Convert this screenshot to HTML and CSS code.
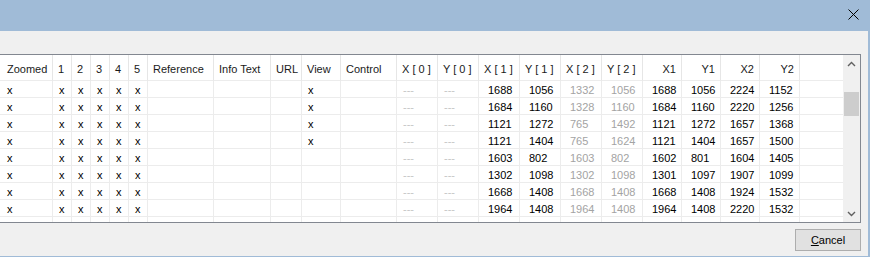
FILE: index.html
```html
<!DOCTYPE html>
<html lang="en">
<head>
    <meta charset="UTF-8">
    <title>Positions</title>
    <link rel="stylesheet" href="styles.css">
</head>
<body>
    <div class="window">
        <div class="titlebar">
            <span class="close">
                <svg width="11" height="11" viewBox="0 0 11 11">
                    <path d="M0.5 0.5 L10.5 10.5 M10.5 0.5 L0.5 10.5" stroke="#000" stroke-width="1" fill="none"/>
                </svg>
            </span>
        </div>

        <div class="dialog-body">
            <div class="grid-box">
                <div class="grid">
                    <div class="row head">
                        <div class="cell first">Zoomed</div>
                        <div class="cell">1</div>
                        <div class="cell">2</div>
                        <div class="cell">3</div>
                        <div class="cell">4</div>
                        <div class="cell">5</div>
                        <div class="cell">Reference</div>
                        <div class="cell">Info Text</div>
                        <div class="cell">URL</div>
                        <div class="cell">View</div>
                        <div class="cell">Control</div>
                        <div class="cell">X [ 0 ]</div>
                        <div class="cell">Y [ 0 ]</div>
                        <div class="cell">X [ 1 ]</div>
                        <div class="cell">Y [ 1 ]</div>
                        <div class="cell">X [ 2 ]</div>
                        <div class="cell">Y [ 2 ]</div>
                        <div class="cell right">X1</div>
                        <div class="cell right">Y1</div>
                        <div class="cell right">X2</div>
                        <div class="cell right">Y2</div>
                        <div class="cell fill"></div>
                    </div>

                    <div class="row">
                        <div class="cell first mark">x</div>
                        <div class="cell mark">x</div><div class="cell mark">x</div><div class="cell mark">x</div><div class="cell mark">x</div><div class="cell mark">x</div>
                        <div class="cell"></div><div class="cell"></div><div class="cell"></div>
                        <div class="cell mark">x</div><div class="cell"></div>
                        <div class="cell dash">---</div><div class="cell dash">---</div>
                        <div class="cell num">1688</div><div class="cell num">1056</div>
                        <div class="cell num dim">1332</div><div class="cell num dim">1056</div>
                        <div class="cell num">1688</div><div class="cell num">1056</div><div class="cell num">2224</div><div class="cell num">1152</div>
                        <div class="cell fill"></div>
                    </div>
                    <div class="row">
                        <div class="cell first mark">x</div>
                        <div class="cell mark">x</div><div class="cell mark">x</div><div class="cell mark">x</div><div class="cell mark">x</div><div class="cell mark">x</div>
                        <div class="cell"></div><div class="cell"></div><div class="cell"></div>
                        <div class="cell mark">x</div><div class="cell"></div>
                        <div class="cell dash">---</div><div class="cell dash">---</div>
                        <div class="cell num">1684</div><div class="cell num">1160</div>
                        <div class="cell num dim">1328</div><div class="cell num dim">1160</div>
                        <div class="cell num">1684</div><div class="cell num">1160</div><div class="cell num">2220</div><div class="cell num">1256</div>
                        <div class="cell fill"></div>
                    </div>
                    <div class="row">
                        <div class="cell first mark">x</div>
                        <div class="cell mark">x</div><div class="cell mark">x</div><div class="cell mark">x</div><div class="cell mark">x</div><div class="cell mark">x</div>
                        <div class="cell"></div><div class="cell"></div><div class="cell"></div>
                        <div class="cell mark">x</div><div class="cell"></div>
                        <div class="cell dash">---</div><div class="cell dash">---</div>
                        <div class="cell num">1121</div><div class="cell num">1272</div>
                        <div class="cell num dim">765</div><div class="cell num dim">1492</div>
                        <div class="cell num">1121</div><div class="cell num">1272</div><div class="cell num">1657</div><div class="cell num">1368</div>
                        <div class="cell fill"></div>
                    </div>
                    <div class="row">
                        <div class="cell first mark">x</div>
                        <div class="cell mark">x</div><div class="cell mark">x</div><div class="cell mark">x</div><div class="cell mark">x</div><div class="cell mark">x</div>
                        <div class="cell"></div><div class="cell"></div><div class="cell"></div>
                        <div class="cell mark">x</div><div class="cell"></div>
                        <div class="cell dash">---</div><div class="cell dash">---</div>
                        <div class="cell num">1121</div><div class="cell num">1404</div>
                        <div class="cell num dim">765</div><div class="cell num dim">1624</div>
                        <div class="cell num">1121</div><div class="cell num">1404</div><div class="cell num">1657</div><div class="cell num">1500</div>
                        <div class="cell fill"></div>
                    </div>
                    <div class="row">
                        <div class="cell first mark">x</div>
                        <div class="cell mark">x</div><div class="cell mark">x</div><div class="cell mark">x</div><div class="cell mark">x</div><div class="cell mark">x</div>
                        <div class="cell"></div><div class="cell"></div><div class="cell"></div>
                        <div class="cell"></div><div class="cell"></div>
                        <div class="cell dash">---</div><div class="cell dash">---</div>
                        <div class="cell num">1603</div><div class="cell num">802</div>
                        <div class="cell num dim">1603</div><div class="cell num dim">802</div>
                        <div class="cell num">1602</div><div class="cell num">801</div><div class="cell num">1604</div><div class="cell num">1405</div>
                        <div class="cell fill"></div>
                    </div>
                    <div class="row">
                        <div class="cell first mark">x</div>
                        <div class="cell mark">x</div><div class="cell mark">x</div><div class="cell mark">x</div><div class="cell mark">x</div><div class="cell mark">x</div>
                        <div class="cell"></div><div class="cell"></div><div class="cell"></div>
                        <div class="cell"></div><div class="cell"></div>
                        <div class="cell dash">---</div><div class="cell dash">---</div>
                        <div class="cell num">1302</div><div class="cell num">1098</div>
                        <div class="cell num dim">1302</div><div class="cell num dim">1098</div>
                        <div class="cell num">1301</div><div class="cell num">1097</div><div class="cell num">1907</div><div class="cell num">1099</div>
                        <div class="cell fill"></div>
                    </div>
                    <div class="row">
                        <div class="cell first mark">x</div>
                        <div class="cell mark">x</div><div class="cell mark">x</div><div class="cell mark">x</div><div class="cell mark">x</div><div class="cell mark">x</div>
                        <div class="cell"></div><div class="cell"></div><div class="cell"></div>
                        <div class="cell"></div><div class="cell"></div>
                        <div class="cell dash">---</div><div class="cell dash">---</div>
                        <div class="cell num">1668</div><div class="cell num">1408</div>
                        <div class="cell num dim">1668</div><div class="cell num dim">1408</div>
                        <div class="cell num">1668</div><div class="cell num">1408</div><div class="cell num">1924</div><div class="cell num">1532</div>
                        <div class="cell fill"></div>
                    </div>
                    <div class="row">
                        <div class="cell first mark">x</div>
                        <div class="cell mark">x</div><div class="cell mark">x</div><div class="cell mark">x</div><div class="cell mark">x</div><div class="cell mark">x</div>
                        <div class="cell"></div><div class="cell"></div><div class="cell"></div>
                        <div class="cell"></div><div class="cell"></div>
                        <div class="cell dash">---</div><div class="cell dash">---</div>
                        <div class="cell num">1964</div><div class="cell num">1408</div>
                        <div class="cell num dim">1964</div><div class="cell num dim">1408</div>
                        <div class="cell num">1964</div><div class="cell num">1408</div><div class="cell num">2220</div><div class="cell num">1532</div>
                        <div class="cell fill"></div>
                    </div>
                    <!-- next row, cut off by the box -->
                    <div class="row">
                        <div class="cell first"></div>
                        <div class="cell"></div><div class="cell"></div><div class="cell"></div><div class="cell"></div><div class="cell"></div>
                        <div class="cell"></div><div class="cell"></div><div class="cell"></div>
                        <div class="cell"></div><div class="cell"></div>
                        <div class="cell"></div><div class="cell"></div>
                        <div class="cell"></div><div class="cell"></div>
                        <div class="cell"></div><div class="cell"></div>
                        <div class="cell"></div><div class="cell"></div><div class="cell"></div><div class="cell"></div>
                        <div class="cell fill"></div>
                    </div>
                </div>

                <div class="vscroll">
                    <div class="scroll-btn">
                        <svg width="9" height="6" viewBox="0 0 9 6">
                            <path d="M1 5 L4.5 1.5 L8 5" stroke="#606060" stroke-width="1.4" fill="none"/>
                        </svg>
                    </div>
                    <div class="scroll-track">
                        <div class="scroll-thumb"></div>
                    </div>
                    <div class="scroll-btn">
                        <svg width="9" height="6" viewBox="0 0 9 6">
                            <path d="M1 1 L4.5 4.5 L8 1" stroke="#606060" stroke-width="1.4" fill="none"/>
                        </svg>
                    </div>
                </div>
            </div>

            <div class="buttons">
                <button class="btn"><u>C</u>ancel</button>
            </div>
        </div>
    </div>
</body>
</html>
```

FILE: styles.css
```css
* {
    margin: 0;
    padding: 0;
    box-sizing: border-box;
}

body {
    font-family: 'Liberation Sans', Arial, sans-serif;
    font-size: 11px;
    color: #000;
    background: #fff;
}

.window {
    width: 870px;
    height: 257px;
    border-right: 2px solid #a0bbd7;
    border-bottom: 1px solid #a0bbd7;
    background: #f0f0f0;
    display: flex;
    flex-direction: column;
}

.titlebar {
    height: 31px;
    background: #a0bbd7;
    display: flex;
    justify-content: flex-end;
    padding: 9px 9px 0 0;
}

.close svg {
    display: block;
}

.dialog-body {
    flex: 1;
    display: flex;
    flex-direction: column;
    padding-top: 23px;
}

.grid-box {
    height: 169px;
    margin: 0 7px 0 -1px;
    border: 1px solid #828790;
    background: #fff;
    display: flex;
    overflow: hidden;
}

.grid {
    flex: 1;
    overflow: hidden;
}

.row {
    display: grid;
    grid-template-columns: 53px 19px 19px 19px 19px 19px 66px 57px 31px 39px 56px 41px 41px 41px 41px 41px 41px 39px 39px 39px 40px 1fr;
    height: 17px;
}

.cell {
    border-right: 1px solid #ececec;
    border-bottom: 1px solid #ececec;
    padding: 2px 6px 0;
    line-height: 14px;
    white-space: nowrap;
    overflow: hidden;
}

.row.head {
    height: 26px;
}

.head .cell {
    padding: 4px 5px 0;
    line-height: 21px;
    border-right-color: #e6e6e6;
    color: #1a1a1a;
}

.head .cell.right {
    text-align: right;
}

.cell.first {
    padding-left: 7px;
}

.cell.num {
    padding-left: 9px;
}

.cell.dim {
    color: #a3a3a3;
}

.cell.dash {
    color: #c6c6c6;
}

.cell.fill {
    border-right: none;
}

.vscroll {
    width: 17px;
    background: #f0f0f0;
    display: flex;
    flex-direction: column;
}

.scroll-btn {
    height: 17px;
    display: flex;
    align-items: center;
    justify-content: center;
}

.scroll-track {
    flex: 1;
    padding-top: 20px;
}

.scroll-thumb {
    height: 24px;
    margin: 0 1px;
    background: #cdcdcd;
}

.buttons {
    display: flex;
    justify-content: flex-end;
    padding: 6px 7px 0 0;
}

.btn {
    width: 66px;
    height: 22px;
    border: 1px solid #adadad;
    background: #e1e1e1;
    font-family: 'Liberation Sans', Arial, sans-serif;
    font-size: 11px;
    color: #000;
}
```
